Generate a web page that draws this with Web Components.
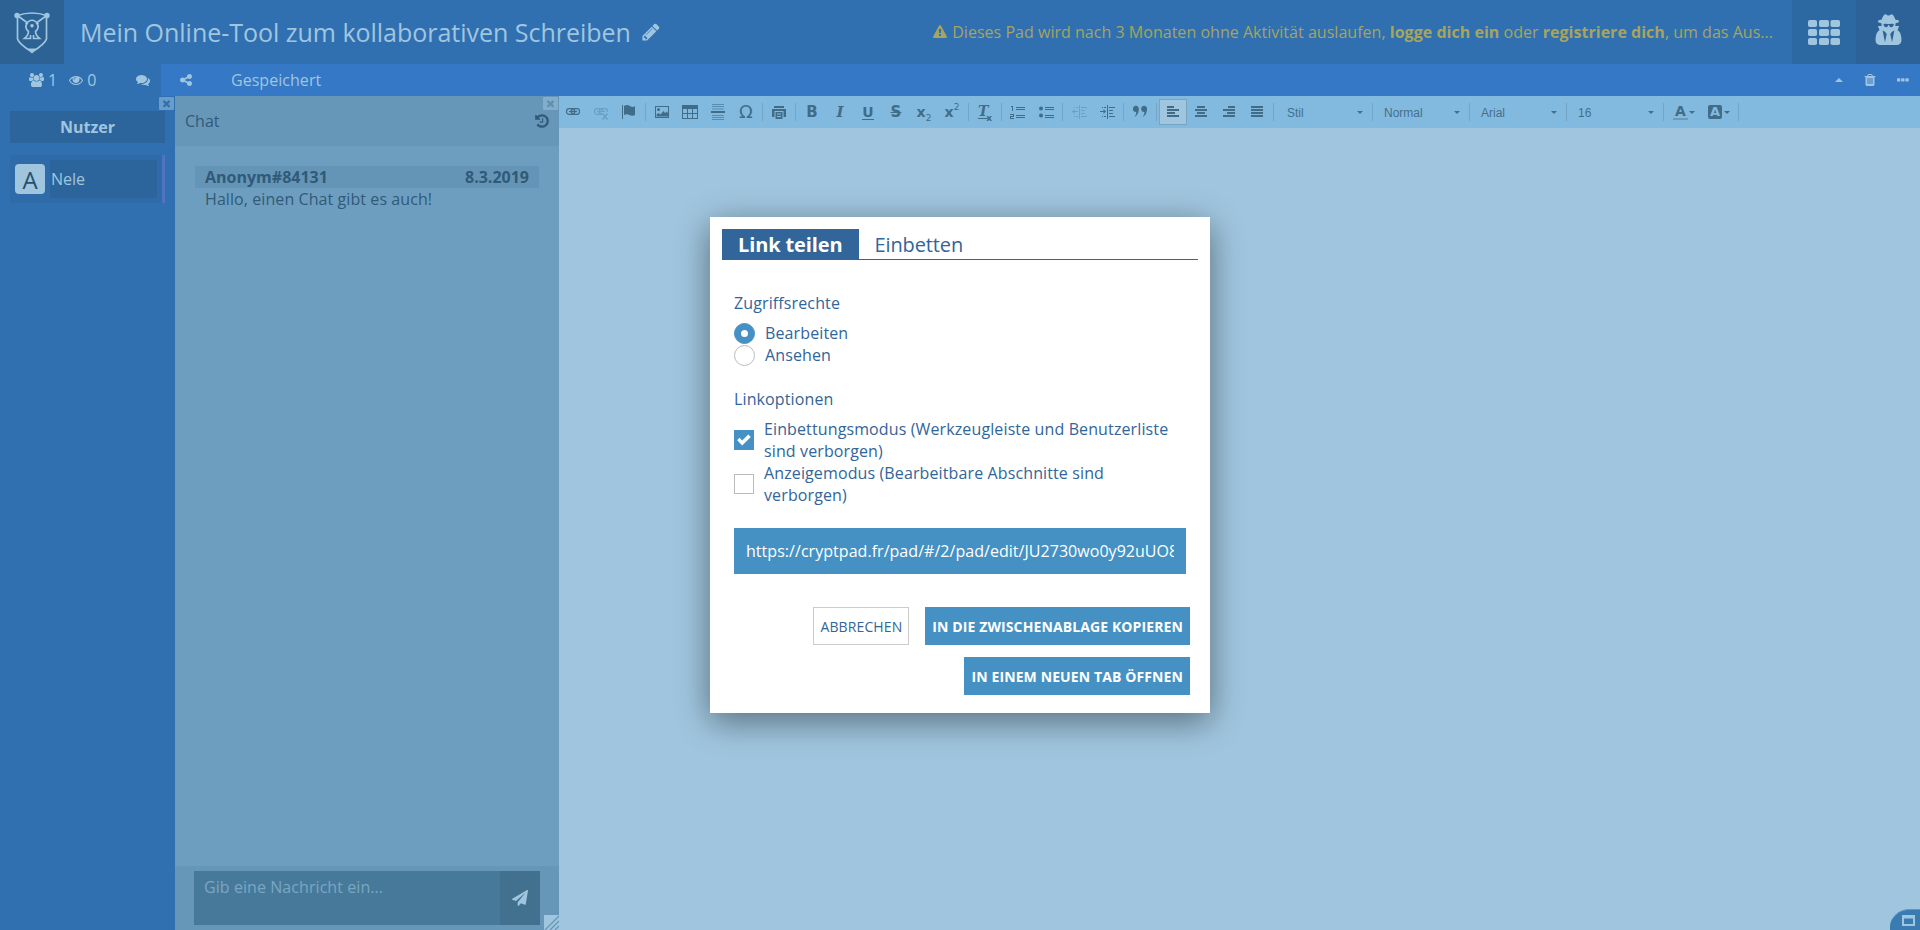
<!DOCTYPE html>
<html lang="de">
<head>
<meta charset="utf-8">
<title>Pad</title>
<style>
html,body{margin:0;height:100%;overflow:hidden;font-family:"Open Sans",sans-serif;font-size:16px;color:#a0c6df}
</style>
</head>
<body>
<pad-app></pad-app>
<script>
const define=(name,html)=>{
  const t=document.createElement('template');t.innerHTML=html;
  customElements.define(name,class extends HTMLElement{
    constructor(){super();this.attachShadow({mode:'open'}).appendChild(t.content.cloneNode(true));}
  });
};

const fa=d=>['0 0 1792 1792',`<path d="${d}"/>`];
const link='<g fill="none" stroke="currentColor" stroke-width="1.2"><rect x="1.6" y="4.6" width="8" height="5.8" rx="2.4"/><rect x="6.4" y="4.6" width="8" height="5.8" rx="2.4"/></g><path d="M4 6.8h8v1.4H4z"/>';
const dent='<path d="M8 1h1v14H8zM10 3h6v1h-6zM10 6h4v1h-4zM10 9h4v1h-4zM10 12h6v1h-6zM3 3h1v1H3zM5 3h2v1H5zM3 12h1v1H3zM5 12h2v1H5z"/>';
const ICONS={
  pencil:fa('M491 1536l91-91-235-235-91 91v107h128v128h107zm523-928q0-22-22-22-10 0-17 7l-542 542q-7 7-7 17 0 22 22 22 10 0 17-7l542-542q7-7 7-17zm-54-192l416 416-832 832h-416v-416zm683 96q0 53-37 90l-166 166-416-416 166-165q36-38 90-38 53 0 91 38l235 234q37 39 37 91z'),
  share:fa('M1344 1024q133 0 226.500 93.500t93.500 226.500-93.500 226.500-226.500 93.500-226.500-93.500-93.500-226.500q0-12 2-34l-360-180q-92 86-218 86-133 0-226.500-93.500t-93.500-226.500 93.500-226.500 226.500-93.500q126 0 218 86l360-180q-2-22-2-34 0-133 93.500-226.500t226.500-93.500 226.500 93.500 93.500 226.500-93.500 226.500-226.500 93.500q-126 0-218-86l-360 180q2 22 2 34t-2 34l360 180q92-86 218-86z'),
  warning:fa('M1024 1375v-190q0-14-9.500-23.500t-22.500-9.500h-192q-13 0-22.500 9.500t-9.500 23.500v190q0 14 9.500 23.500t22.500 9.500h192q13 0 22.500-9.500t9.500-23.500zm-2-374l18-459q0-12-10-19-13-11-24-11h-220q-11 0-24 11-10 7-10 21l17 457q0 10 10 16.500t24 6.500h185q14 0 23.500-6.500t10.500-16.500zm-14-934l768 1408q35 63-2 126-17 29-46.500 46t-63.500 17h-1536q-34 0-63.500-17t-46.500-46q-37-63-2-126l768-1408q17-31 47-49t65-18 65 18 47 49z'),
  comments:fa('M1408 768q0 139-94 257t-256.500 186.500-353.500 68.500q-86 0-176-16-124 88-278 128-36 9-86 16h-3q-11 0-20.500-8t-11.500-21q-1-3-1-6.500t.5-6.500 2-6l2.500-5 3.500-5.500 4-5 4.500-5 4-4.500q5-6 23-25t26-29.500 22.500-29 25-38.500 20.500-44q-124-72-195-177t-71-224q0-139 94-257t256.500-186.500 353.500-68.500 353.500 68.500 256.500 186.500 94 257zm384 256q0 120-71 224.500t-195 176.500q10 24 20.500 44t25 38.500 22.500 29 26 29.500 23 25q1 1 4 4.500t4.500 5 4 5 3.500 5.500l2.500 5 2 6 .5 6.500-1 6.500q-3 14-13 22t-22 7q-50-7-86-16-154-40-278-128-90 16-176 16-271 0-472-132 58 4 88 4 161 0 309-45t264-129q125-92 192-212t67-254q0-77-23-152 129 71 204 178t75 230z'),
  eye:fa('M1664 960q-152-236-381-353 61 104 61 225 0 185-131.500 316.500t-316.500 131.500-316.500-131.500-131.500-316.500q0-121 61-225-229 117-381 353 133 205 333.500 326.500t434.500 121.500 434.500-121.500 333.500-326.500zm-720-384q0-20-14-34t-34-14q-125 0-214.500 89.500t-89.500 214.500q0 20 14 34t34 14 34-14 14-34q0-86 61-147t147-61q20 0 34-14t14-34zm848 384q0 34-20 69-140 230-376.500 368.500t-499.500 138.500-499.500-139-376.500-368q-20-35-20-69t20-69q140-229 376.500-368t499.500-139 499.500 139 376.500 368q20 35 20 69z'),
  trash:fa('M704 1376v-704q0-14-9-23t-23-9h-64q-14 0-23 9t-9 23v704q0 14 9 23t23 9h64q14 0 23-9t9-23zm256 0v-704q0-14-9-23t-23-9h-64q-14 0-23 9t-9 23v704q0 14 9 23t23 9h64q14 0 23-9t9-23zm256 0v-704q0-14-9-23t-23-9h-64q-14 0-23 9t-9 23v704q0 14 9 23t23 9h64q14 0 23-9t9-23zm-544-992h448l-48-117q-7-9-17-11h-317q-10 2-17 11zm928 32v64q0 14-9 23t-23 9h-96v948q0 83-47 143.500t-113 60.500h-832q-66 0-113-58.500t-47-141.500v-952h-96q-14 0-23-9t-9-23v-64q0-14 9-23t23-9h309l70-167q15-37 54-63t79-26h320q40 0 79 26t54 63l70 167h309q14 0 23 9t9 23z'),
  times:fa('M1490 1322q0 40-28 68l-136 136q-28 28-68 28t-68-28l-294-294-294 294q-28 28-68 28t-68-28l-136-136q-28-28-28-68t28-68l294-294-294-294q-28-28-28-68t28-68l136-136q28-28 68-28t68 28l294 294 294-294q28-28 68-28t68 28l136 136q28 28 28 68t-28 68l-294 294 294 294q28 28 28 68z'),
  plane:fa('M1764 11q33 24 27 64l-256 1536q-5 29-32 45-14 8-31 8-11 0-24-5l-453-185-242 295q-18 23-49 23-13 0-22-4-19-7-30.500-23.500t-11.500-36.500v-349l864-1059-1069 925-395-162q-37-14-40-55-2-40 32-59l1664-960q15-9 32-9 20 0 36 11z'),
  history:fa('M1664 896q0 156-61 298t-164 245-245 164-298 61q-172 0-327-72.500t-264-204.500q-7-10-6.500-22.500t8.500-20.500l137-138q10-9 25-9 16 2 23 12 73 95 179 147t225 52q104 0 198.500-40.500t163.500-109.500 109.500-163.500 40.500-198.500-40.500-198.500-109.500-163.500-163.500-109.500-198.500-40.500q-98 0-188 35.500t-160 101.500l137 138q31 30 14 69-17 40-59 40h-448q-26 0-45-19t-19-45v-448q0-42 40-59 39-17 69 14l130 129q107-101 244.500-156.500t284.500-55.500q156 0 298 61t245 164 164 245 61 298zm-640-288v448q0 14-9 23t-23 9h-320q-14 0-23-9t-9-23v-64q0-14 9-23t23-9h224v-352q0-14 9-23t23-9h64q14 0 23 9t9 23z'),
  secret:fa('M704 1536l96-448-96-128-128-64zm384 0l128-640-128 64-96 128zm104-993q-2-4-4-6-10-8-96-8-70 0-167 19-7 2-21 2t-21-2q-97-19-167-19-86 0-96 8-2 2-4 6 2 18 4 27 2 3 7.500 6.500t7.500 10.500q2 4 7.500 20.500t7 20.500 7.500 17 8.500 17 9 14 12 13.500 14 9.500 17.500 8 20.500 4 24.500 2q36 0 59-12.500t32.500-30 14.500-34.500 11.500-29.500 17.500-12.500h12q11 0 17.500 12.500t11.500 29.500 14.500 34.500 32.500 30 59 12.500q13 0 24.500-2t20.500-4 17.500-8 14-9.500 12-13.500 9-14 8.500-17 7.500-17 7-20.500 7.500-20.500q2-7 7.500-10.500t7.500-6.500q2-9 4-27zm408 879q0 121-73 190t-194 69h-874q-121 0-194-69t-73-190q0-61 4.500-118t19-125.500 37.500-123.500 63.500-103.500 93.500-74.500l-90-220h214q-22-64-22-128 0-12 2-32-194-40-194-96 0-57 210-99 17-62 51.500-134t70.500-114q32-37 76-37 30 0 84 31t84 31 84-31 84-31q44 0 76 37 36 42 70.500 114t51.500 134q210 42 210 99 0 56-194 96 7 81-20 160h214l-82 225q63 33 107.500 96.500t65.500 143.500 29 151.500 8 148.500z'),
  users:['-64 0 1920 1792','<path d="M529 896q-162 5-265 128h-134q-82 0-138-40.500t-56-118.500q0-353 124-353 6 0 43.500 21t97.500 42.500 119 21.500q67 0 133-23-5 37-5 66 0 159 90 288zm1071 637q0 120-73 189.500t-194 69.500h-874q-121 0-194-69.500t-73-189.500q0-53 3.500-103.500t14-109 26.500-108.500 43-97.500 62-81 85.500-53.500 111.500-20q10 0 43 21.500t73 48 107 48 135 21.500 135-21.500 107-48 73-48 43-21.500q61 0 111.500 20t85.500 53.500 62 81 43 97.500 26.500 108.500 14 109 3.500 103.500zm-1024-1277q0 106-75 181t-181 75-181-75-75-181 75-181 181-75 181 75 75 181zm704 384q0 159-112.500 271.500t-271.500 112.500-271.500-112.500-112.500-271.500 112.500-271.500 271.500-112.500 271.500 112.500 112.500 271.500zm576 225q0 78-56 118.500t-138 40.500h-134q-103-123-265-128 90-129 90-288 0-29-5-66 66 23 133 23 59 0 119-21.500t97.500-42.500 43.500-21q124 0 124 353zm-128-609q0 106-75 181t-181 75-181-75-75-181 75-181 181-75 181 75 75 181z"/>'],
  shield:['0 0 36 43','<g fill="none" stroke="currentColor" stroke-width="1.700"><path d="M3.500 4.500Q18-.5 32.500 4.500V28Q31 33 18 41Q5 33 3.500 28Z"/><path d="M4 5L13 11.500M32 5L23 11.500M11.500 13.500Q18 5 24.500 13.500M14 11.500Q9.500 16 14.500 20.500Q14.500 24 10.500 27.500H16.500V24M22 11.500Q26.500 16 21.500 20.500Q21.500 24 25.500 27.500H19.500V24"/></g><circle cx="3" cy="4.500" r="2.700"/><circle cx="33" cy="4.500" r="2.700"/><circle cx="18" cy="14.700" r="1.800"/><path d="M13 37.500h10l-5 5z"/>'],
  grid:['0 0 32 25','<rect width="9" height="7" rx="1.800"/><rect x="11" width="10" height="7" rx="1.800"/><rect x="22.500" width="9.500" height="7" rx="1.800"/><rect y="9" width="9" height="7" rx="1.800"/><rect x="11" y="9" width="10" height="7" rx="1.800"/><rect x="22.500" y="9" width="9.500" height="7" rx="1.800"/><rect y="18" width="9" height="7" rx="1.800"/><rect x="11" y="18" width="10" height="7" rx="1.800"/><rect x="22.500" y="18" width="9.500" height="7" rx="1.800"/>'],
  up:['0 0 8 4','<path d="M0 4L4 0L8 4Z"/>'],
  down:['0 0 6 3','<path d="M0 0H6L3 3Z"/>'],
  dots:['0 0 12 4','<rect width="3.300" height="3.300" y=".3" rx=".6"/><rect x="4.200" y=".3" width="3.300" height="3.300" rx=".6"/><rect x="8.400" y=".3" width="3.300" height="3.300" rx=".6"/>'],
  check:['0 0 14 12','<path d="M.2 6.300L2.500 3.800L5.200 6.500L11.300 .5L13.800 3L5.200 11.500Z"/>'],
  link:['0 0 16 16',link],
  unlink:['0 0 16 16',link+'<path d="M9 8h7v8H9z" fill="#82badf"/><path d="M9.500 9.500l5 6M14.500 9.500l-5 6" stroke="currentColor" stroke-width="1.600"/>'],
  flag:['0 0 16 16','<path d="M1 1h1v14H1zM3 2q3-2 6 0t5 0v9q-3 1.500-5.500 0T3 11z"/>'],
  image:['0 0 16 16','<path d="M1 2h14v12H1zM2 3v10h12V3z" fill-rule="evenodd"/><circle cx="4.500" cy="5.500" r="1.500"/><path d="M2.500 12.500v-2l2-1.500 2 1.500 3-3.500 1.500 2 2-1.500 1 2v3z"/>'],
  table:['0 0 16 16','<path d="M0 1h16v14H0zM1 5v4h4V5zM6 5v4h4V5zM11 5v4h4V5zM1 10v4h4v-4zM6 10v4h4v-4zM11 10v4h4v-4z" fill-rule="evenodd"/>'],
  hr:['0 0 16 16','<path d="M1 7h14v2H1z"/><path opacity=".6" d="M2 0h12v1H2zM2 2h12v1H2zM2 4.500h12v1H2zM2 11h12v1H2zM2 13h12v1H2zM2 15h12v1H2z"/>'],
  print:['0 0 16 16','<path d="M3 2h10v2H3zM1 5h14v8h-2.500V7h-9v6H1zM4.500 8h7v7h-7z"/><path stroke="#82badf" d="M6 10h4M6 12.500h4"/>'],
  ol:['0 0 16 16','<path d="M6 3h9v1H6zM6 5h9v1H6zM6 11h9v1H6zM6 13h9v1H6zM1 2h2v5H2V3H1zM0 10h4v3H1v1h3v1H0v-3h3v-1H0z"/>'],
  ul:['0 0 16 16','<circle cx="3" cy="4.500" r="2"/><circle cx="3" cy="11.500" r="2"/><path d="M7 3h9v1H7zM7 5h9v1H7zM7 11h9v1H7zM7 13h9v1H7z"/>'],
  outdent:['0 0 16 16',dent+'<path d="M1 7.500L3.500 5v2H7v1H3.500v2z"/>'],
  indent:['0 0 16 16',dent+'<path d="M7 7.500L4.500 5v2H1v1h3.500v2z"/>'],
  quote:['0 0 16 16','<path d="M1 5.500a3 3 0 1 1 5.800 0Q6.500 11 2.500 13q2.200-3 1.700-5Q1.300 8 1 5.500zM9.200 5.500a3 3 0 1 1 5.800 0Q14.700 11 10.700 13q2.200-3 1.700-5Q9.500 8 9.200 5.500z"/>'],
  left:['0 0 16 16','<path d="M2 2h7v2H2zM2 5h12v2H2zM2 8h8v2H2zM2 11h12v2H2z"/>'],
  center:['0 0 16 16','<path d="M4 2h8v2H4zM2 5h12v2H2zM4 8h8v2H4zM2 11h12v2H2z"/>'],
  right:['0 0 16 16','<path d="M7 2h7v2H7zM2 5h12v2H2zM6 8h8v2H6zM2 11h12v2H2z"/>'],
  justify:['0 0 16 16','<path d="M2 2h12v2H2zM2 5h12v2H2zM2 8h12v2H2zM2 11h12v2H2z"/>'],
  win:['0 0 13 11','<path d="M0 0h13v11H0zM2 3.500v5.500h9V3.500z" fill-rule="evenodd"/>']
};
customElements.define('pad-icon',class extends HTMLElement{
  constructor(){super();this.attachShadow({mode:'open'});}
  connectedCallback(){
    const [vb,body]=ICONS[this.getAttribute('name')];
    const w=this.getAttribute('w')||16,h=this.getAttribute('h')||w;
    this.shadowRoot.innerHTML=`<style>:host{display:inline-flex;flex:none}svg{display:block;fill:currentColor;overflow:visible}</style><svg width="${w}" height="${h}" viewBox="${vb}">${body}</svg>`;
  }
});

define('pad-header',`<style>
:host{display:flex;height:64px;background:#3070b1;align-items:center}
.logo,.btn{width:64px;height:64px;display:flex;align-items:center;justify-content:center;flex:none}
.logo{background:#2c6294}
.btn{background:#2c68a2}.user{background:#2c6298}
.user pad-icon{margin-bottom:3px}
.title{font-size:25px;line-height:64px;margin-left:16px;white-space:nowrap;letter-spacing:-.02px}
.title+pad-icon{margin-left:10px;margin-bottom:1px}
.warn{margin-left:auto;margin-right:19px;color:#a6a45f;line-height:64px;white-space:nowrap;display:flex;align-items:center;gap:5px;letter-spacing:.025px}
</style><div class="logo"><pad-icon name="shield" w="36" h="43"></pad-icon></div>
<span class="title">Mein Online-Tool zum kollaborativen Schreiben</span><pad-icon name="pencil" w="20"></pad-icon>
<div class="warn"><pad-icon name="warning" w="14"></pad-icon><span>Dieses Pad wird nach 3 Monaten ohne Aktivität auslaufen, <b>logge dich ein</b> oder <b>registriere dich</b>, um das Aus...</span></div>
<div class="btn"><pad-icon name="grid" w="32" h="25"></pad-icon></div><div class="btn user"><pad-icon name="secret" w="33"></pad-icon></div>`);

define('pad-status',`<style>
:host{display:flex;height:32px;background:#3478c6;line-height:32px}
.l{width:161px;background:#3070b1;display:flex;align-items:center;box-sizing:border-box;padding-left:29px}
.l span{margin-left:4px}.l .c{margin-left:auto;margin-right:11px}.l .eye{margin-left:12px}.l .eye+span{margin-left:4px}
.r{flex:1;display:flex;align-items:center;padding:0 11px 0 18px}
.saved{margin-left:38px;margin-right:auto;letter-spacing:.04px}
</style><div class="l"><pad-icon name="users" w="15" h="14"></pad-icon><span>1</span><pad-icon class="eye" name="eye" w="14"></pad-icon><span>0</span><pad-icon class="c" name="comments" w="14"></pad-icon></div>
<div class="r"><pad-icon name="share" w="14"></pad-icon><span class="saved">Gespeichert</span><pad-icon name="up" w="8" h="4" style="margin-right:20px"></pad-icon><pad-icon name="trash" w="14" style="margin-right:20px"></pad-icon><pad-icon name="dots" w="12" h="4"></pad-icon></div>`);

define('pad-close',`<style>:host{display:flex;width:15px;height:13px;align-items:center;justify-content:center;border-radius:1px;position:absolute;top:1px;right:1px}</style><pad-icon name="times" w="11"></pad-icon>`);

define('pad-users',`<style>
:host{display:flex;flex-direction:column;width:175px;background:#3070b1;position:relative;box-sizing:border-box;padding:15px 10px 0}
pad-close{background:#6a9cca;color:#3070b1}
.h{height:32px;line-height:32px;background:#2c659c;font-weight:700;text-align:center}
.u{margin-top:12px;height:48px;box-sizing:border-box;background:#2e6ba8;border-right:3px solid #5272c4;display:flex;align-items:center;padding:0 5px}
.a{width:30px;height:30px;border-radius:4px;background:#a0c6df;color:#28506c;font-size:24px;line-height:31px;text-align:center}
.n{flex:1;margin-left:5px;height:38px;line-height:38px;background:#2c659c;padding-left:1px}
</style><pad-close></pad-close><div class="h">Nutzer</div><div class="u"><div class="a">A</div><div class="n">Nele</div></div>`);

define('pad-chat',`<style>
:host{display:flex;flex-direction:column;width:384px;background:#6e9ebf;color:#305a78;position:relative}
pad-close{background:#83aeca;color:#5f90b2}
.h{height:50px;background:#6797b8;display:flex;align-items:center;justify-content:space-between;padding:0 9px 0 10px}
.h span{line-height:50px}
.m{flex:1;padding:20px 20px 0}
.mh{height:22px;line-height:22px;background:#6595b6;display:flex;justify-content:space-between;padding:0 10px;font-weight:700}
.mt{line-height:22px;padding-left:10px;letter-spacing:.08px}
.f{height:64px;box-sizing:border-box;background:#6797b8;padding:5px 19px;display:flex}
.i{flex:1;background:#477a9a;color:#7aa6c3;line-height:22px;padding:5px 10px;letter-spacing:.07px}
.s{width:40px;background:#41718f;color:#a0c6df;display:flex;align-items:center;justify-content:center}
.g{position:absolute;right:0;bottom:0;width:15px;height:15px;background:#a0c6df}
</style><pad-close></pad-close><div class="h"><span>Chat</span><pad-icon name="history" w="16"></pad-icon></div>
<div class="m"><div class="mh"><span>Anonym#84131</span><span>8.3.2019</span></div><div class="mt">Hallo, einen Chat gibt es auch!</div></div>
<div class="f"><div class="i">Gib eine Nachricht ein...</div><div class="s"><pad-icon name="plane" w="16"></pad-icon></div></div>
<svg class="g" viewBox="0 0 15 15"><path d="M1 15L15 1M6 15L15 6M11 15L15 11" stroke="#6797b8" stroke-width="1.300"/></svg>`);

define('tb-button',`<style>:host{display:flex;width:28px;height:26px;box-sizing:border-box;align-items:center;justify-content:center;flex:none}
:host([on]){background:#a0c6df;border:1px solid #79a5c1}:host([off]){color:#6b9fc6}</style><slot></slot>`);
define('tb-sep',`<style>:host{display:block;width:1px;height:18px;margin:0 2px;background:#76a5c4;flex:none}</style>`);
define('tb-combo',`<style>:host{display:flex;width:92px;height:26px;box-sizing:border-box;padding:1px 7px 0 9px;align-items:center;justify-content:space-between;font:12px "Liberation Sans",sans-serif;color:#446f8b;flex:none}</style><span><slot></slot></span><pad-icon name="down" w="6" h="3"></pad-icon>`);

define('pad-toolbar',`<style>
:host{display:flex;height:32px;background:#82badf;color:#416c88;align-items:center}
.t{font:700 15px/16px "DejaVu Sans",sans-serif;}
.i{font:italic 700 15px/16px "DejaVu Serif",serif}
.u{font-size:14px;line-height:14px;border-bottom:1px solid}
.s{text-decoration:line-through;text-decoration-thickness:1px}
.x{font-size:14px}
small{font:9px/9px "DejaVu Sans",sans-serif}
.sub{align-self:flex-end;margin-bottom:2px}.sup{align-self:flex-start;margin-top:4px}
.om{font:18px/18px "DejaVu Sans",sans-serif}
.col{display:flex;width:70px;height:26px;align-items:center;padding-left:7px;box-sizing:border-box}
.fc{width:15px;text-align:center;border-bottom:2px solid #7199b5;font:700 14px/13px "DejaVu Sans",sans-serif;margin-top:1px}
.bc{width:14px;height:14px;text-align:center;background:#416c88;color:#82badf;border-radius:2px;font:700 13px/14px "DejaVu Sans",sans-serif}
</style>
<tb-button><pad-icon name="link"></pad-icon></tb-button><tb-button off><pad-icon name="unlink"></pad-icon></tb-button><tb-button><pad-icon name="flag"></pad-icon></tb-button><tb-sep></tb-sep>
<tb-button><pad-icon name="image"></pad-icon></tb-button><tb-button><pad-icon name="table"></pad-icon></tb-button><tb-button><pad-icon name="hr"></pad-icon></tb-button><tb-button><span class="om">Ω</span></tb-button><tb-sep></tb-sep>
<tb-button><pad-icon name="print"></pad-icon></tb-button><tb-sep></tb-sep>
<tb-button><span class="t">B</span></tb-button><tb-button><span class="i">I</span></tb-button><tb-button><span class="t u">U</span></tb-button><tb-button><span class="t s">S</span></tb-button><tb-button><span class="t x">x</span><small class="sub">2</small></tb-button><tb-button><span class="t x">x</span><small class="sup">2</small></tb-button><tb-sep></tb-sep>
<tb-button><span class="i u" style="line-height:13px">T</span><small class="sub" style="margin-left:-2px;font-weight:700">x</small></tb-button><tb-sep></tb-sep>
<tb-button><pad-icon name="ol"></pad-icon></tb-button><tb-button><pad-icon name="ul"></pad-icon></tb-button><tb-sep></tb-sep>
<tb-button off><pad-icon name="outdent"></pad-icon></tb-button><tb-button><pad-icon name="indent"></pad-icon></tb-button><tb-sep></tb-sep>
<tb-button><pad-icon name="quote"></pad-icon></tb-button><tb-sep></tb-sep>
<tb-button on><pad-icon name="left"></pad-icon></tb-button><tb-button><pad-icon name="center"></pad-icon></tb-button><tb-button><pad-icon name="right"></pad-icon></tb-button><tb-button><pad-icon name="justify"></pad-icon></tb-button><tb-sep></tb-sep>
<tb-combo style="margin-left:2px">Stil</tb-combo><tb-sep></tb-sep><tb-combo>Normal</tb-combo><tb-sep></tb-sep><tb-combo>Arial</tb-combo><tb-sep></tb-sep><tb-combo>16</tb-combo><tb-sep></tb-sep>
<div class="col"><span class="fc">A</span><pad-icon name="down" w="6" h="3" style="margin:0 13px 0 1px"></pad-icon><span class="bc">A</span><pad-icon name="down" w="6" h="3" style="margin-left:2px"></pad-icon></div><tb-sep></tb-sep>`);

define('share-option',`<style>
:host{display:flex;align-items:center;min-height:22px;line-height:22px;letter-spacing:.12px}
.m{box-sizing:border-box;width:20px;height:20px;border:1px solid #bbb;display:flex;align-items:center;justify-content:center;flex:none;margin-right:10px;color:#fff}
:host([radio]) .m{width:21px;height:21px;border-radius:50%}
:host([on]) .m{background:#4591c4;border-color:#4591c4}
pad-icon{display:none}:host([on]:not([radio])) pad-icon{display:flex}
:host([on][radio]) .m::after{content:"";width:7px;height:7px;border-radius:50%;background:#fff}
</style><span class="m"><pad-icon name="check" w="14" h="12"></pad-icon></span><span><slot></slot></span>`);

define('dialog-button',`<style>:host{display:block;box-sizing:border-box;height:38px;line-height:40px;padding:0 7px;font-size:14px;font-weight:700;color:#fff;background:#4591c4;white-space:nowrap;letter-spacing:.11px}
:host([plain]){font-weight:400;background:#fff;color:#326599;border:1px solid #ccc;padding:0 6px;line-height:38px}</style><slot></slot>`);

define('share-dialog',`<style>
:host{display:block;box-sizing:border-box;width:500px;height:496px;background:#fff;color:#326599;padding:12px;box-shadow:0 8px 32px rgba(4,4,4,.46)}
.tabs{display:flex;height:31px;box-sizing:border-box;border-bottom:1px solid #326599;font-size:20px;line-height:31px;letter-spacing:-.12px}
.tabs span{padding:0 16px;height:31px}.tabs b{background:#326599;color:#fff;padding:0 16px;height:31px}
.b{padding:32px 12px 0}
p{margin:0;line-height:22px;letter-spacing:.12px}
input{display:block;box-sizing:border-box;margin:22px 0 0;height:46px;width:452px;border:0;border-radius:0;outline:0;background:#4591c4;color:#fff;padding:0 12px;font:inherit;letter-spacing:.04px}
.btns{margin:33px 8px 0 0;display:flex;flex-wrap:wrap;justify-content:flex-end;gap:12px 16px}
</style><div class="tabs"><b>Link teilen</b><span>Einbetten</span></div>
<div class="b"><p>Zugriffsrechte</p>
<share-option radio on style="margin-top:8px">Bearbeiten</share-option><share-option radio>Ansehen</share-option>
<p style="margin:22px 0 8px">Linkoptionen</p>
<share-option on>Einbettungsmodus (Werkzeugleiste und Benutzerliste sind verborgen)</share-option><share-option>Anzeigemodus (Bearbeitbare Abschnitte sind<br>verborgen)</share-option>
<input readonly value="https://cryptpad.fr/pad/#/2/pad/edit/JU2730wo0y92uUO8"></div>
<div class="btns"><dialog-button plain>ABBRECHEN</dialog-button><dialog-button>IN DIE ZWISCHENABLAGE KOPIEREN</dialog-button><dialog-button>IN EINEM NEUEN TAB ÖFFNEN</dialog-button></div>`);

define('pad-app',`<style>
:host{display:flex;flex-direction:column;height:100vh;position:relative;overflow:hidden}
.main{flex:1;display:flex;min-height:0}
.ed{flex:1;background:#a0c6df}
share-dialog{position:absolute;left:710px;top:217px}
.tip{display:flex;position:absolute;right:0;bottom:0;width:30px;height:21px;box-sizing:border-box;background:#3a7bb2;border-top-left-radius:20px 18px;border-top:1px solid #5c96c4;color:#a0c6df;padding:5px 0 0 12px}
</style><pad-header></pad-header><pad-status></pad-status>
<div class="main"><pad-users></pad-users><pad-chat></pad-chat><div class="ed"><pad-toolbar></pad-toolbar></div></div>
<div class="tip"><pad-icon name="win" w="13" h="11"></pad-icon></div>
<share-dialog></share-dialog>`);
</script>
</body>
</html>
